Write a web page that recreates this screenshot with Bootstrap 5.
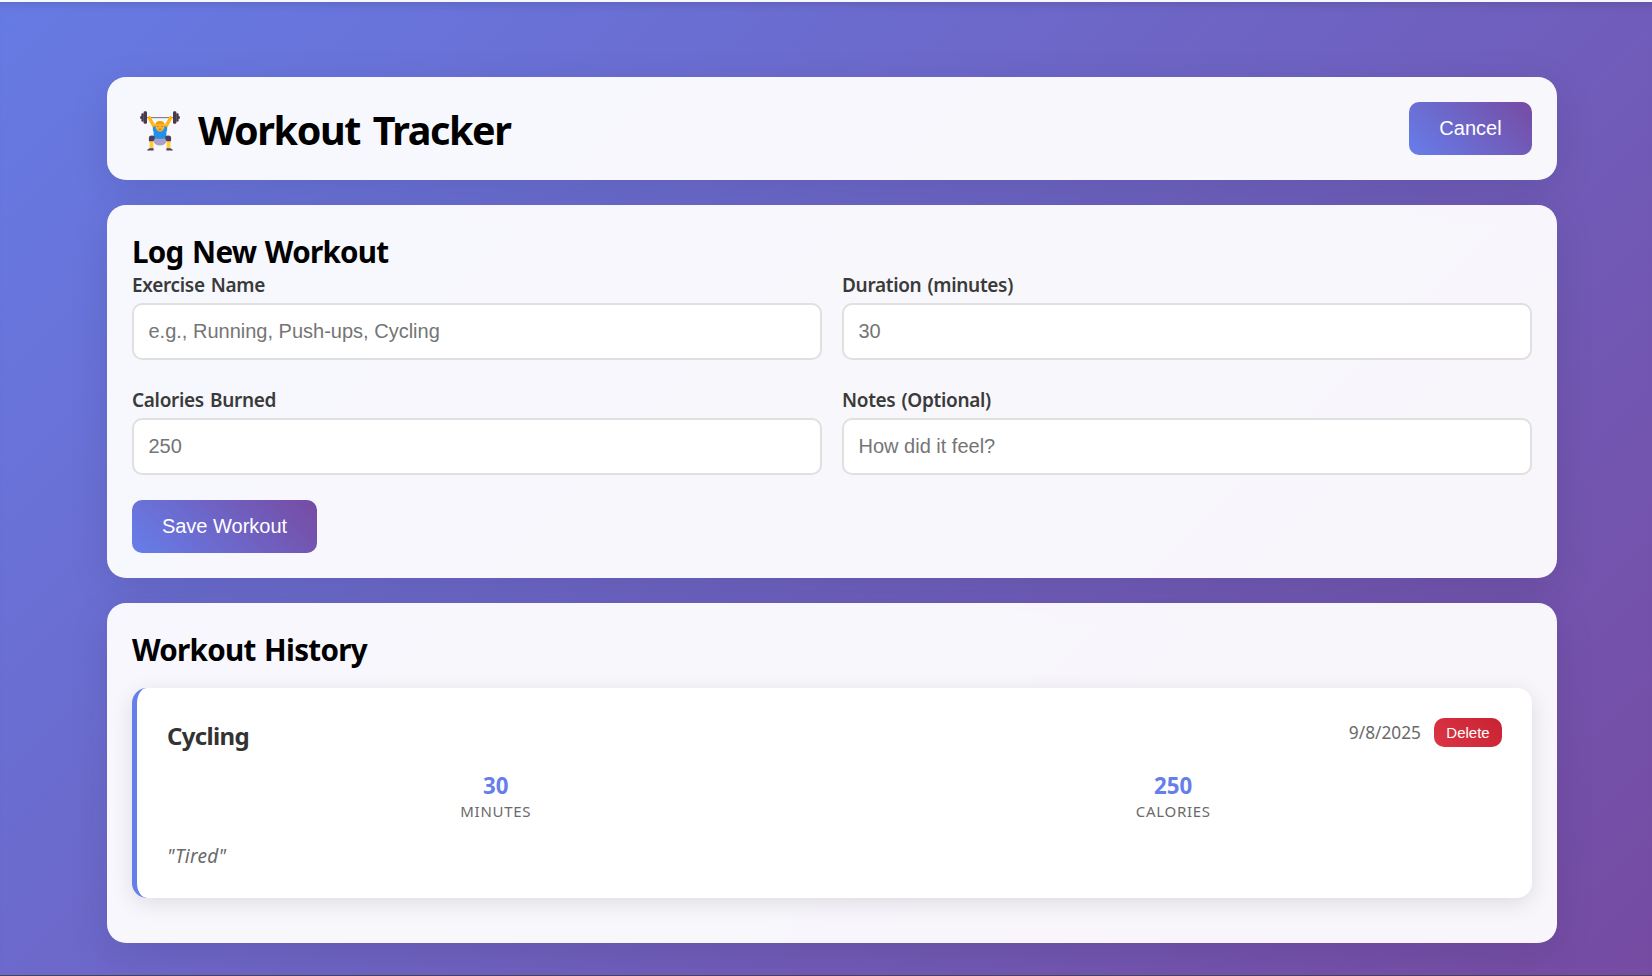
<!DOCTYPE html>
<html lang="en">
<head>
<meta charset="utf-8">
<meta name="viewport" content="width=device-width, initial-scale=1">
<title>Workout Tracker</title>
<link href="https://cdn.jsdelivr.net/npm/bootstrap@5.3.0/dist/css/bootstrap.min.css" rel="stylesheet">
<style>
body { font-family: "Noto Sans", "Open Sans", sans-serif; color: #000; height: 976px; overflow: hidden; background: #667eea; }
.page { background: linear-gradient(135deg, #667be4 0%, #764ba2 100%); min-height: 0; padding: 75px 95px 0 107px; box-shadow: inset 0 9px 10px -7px rgba(0,0,0,.13); }
.topline { height: 2px; background: #f7f8fd; }
.bottomline { height: 1px; background: #454552; }
.panel { background: rgba(255,255,255,.95); border: 0; border-radius: 19px; padding: 25px; box-shadow: 0 10px 40px rgba(0,0,0,.1); }
.panel + .panel { margin-top: 25px; }
.panel-head { height: 103px; }
h1 { font-size: 39.5px; font-weight: 700; line-height: 57px; letter-spacing: -1.4px; word-spacing: 4px; }
h2 { font-size: 29.6px; font-weight: 700; line-height: 43px; height: 41px; letter-spacing: -.72px; word-spacing: 1.5px; }
.lifter { width: 40px; height: 41px; margin: 9px 18px 0 8px; }
.btn-grad, .btn-grad:hover { background: linear-gradient(45deg, #667eea, #764ba2); color: #fff; border: 0; border-radius: 10px; font: 20px/23px "Liberation Sans", sans-serif; height: 53px; padding: 0; }
.btn-cancel { width: 123px; }
.btn-save { width: 185px; margin-top: 25px; }
.form-grid { display: grid; grid-template-columns: 1fr 1fr; gap: 26px 20px; }
.form-label { display: block; font-size: 19px; font-weight: 600; line-height: 29px; height: 27px; letter-spacing: -.32px; word-spacing: 1.5px; color: #3a3a3a; margin-bottom: 5px; }
.form-control { height: 57px; border: 2px solid #e0e0e0; border-radius: 10px; padding: 0 14.5px; font: 20px/23px "Liberation Sans", sans-serif; }
.form-control::placeholder { color: #757575; }
.entry { background: #fff; border-left: 5px solid #667eea; border-radius: 15px; padding: 30px; height: 210px; margin: 19px 0 20px; box-shadow: 0 5px 22px rgba(0,0,0,.11); }
h3 { font-size: 24px; font-weight: 700; line-height: 35px; height: 33px; letter-spacing: -.65px; color: #333; }
.date { font-size: 17.3px; line-height: 29px; color: #6a6a6a; }
.btn-del, .btn-del:hover { background: linear-gradient(45deg, #dc3545, #c82333); color: #fff; border: 0; border-radius: 10px; font: 15px/17px "Liberation Sans", sans-serif; height: 29px; padding: 0 12px; width: 68px; }
.stats { display: grid; grid-template-columns: 1fr 1fr; gap: 20px; margin: 20px 0; }
.num { font-size: 22.3px; font-weight: 700; line-height: 30px; color: #667eea; }
.unit { font-size: 15px; line-height: 21px; letter-spacing: .7px; color: #6a6a6a; text-transform: uppercase; }
.remark { font-size: 19px; line-height: 28px; letter-spacing: .25px; color: #6a6a6a; }
</style>
</head>
<body class="d-flex flex-column">
<div class="topline flex-shrink-0"></div>
<main class="page flex-grow-1">
  <header class="panel panel-head d-flex justify-content-between align-items-start">
    <div class="d-flex align-items-start">
      <svg class="lifter" viewBox="0 0 40 41" aria-hidden="true">
        <path d="M5 6.6H35" stroke="#888087" stroke-width="1.2"/>
        <path d="M9.3 6.8L15.6 18.4M30.7 6.8L24.4 18.4" stroke="#fbb816" stroke-width="3.4" stroke-linecap="round"/>
        <g fill="#47384f"><rect x="0.2" y="5.2" width="2" height="2.6"/><rect x="1.4" y="2.2" width="2.4" height="8.6" rx="1"/><rect x="3.6" y=".2" width="3.4" height="12.6" rx="1.2"/><rect x="37.8" y="5.2" width="2" height="2.6"/><rect x="36.2" y="2.2" width="2.4" height="8.6" rx="1"/><rect x="33" y=".2" width="3.4" height="12.6" rx="1.2"/></g>
        <path d="M11.4 29V38M28.6 29V38" stroke="#ffce35" stroke-width="3.8"/>
        <path d="M13.5 15.5Q20 13.8 26.5 15.5Q28 17 26.4 21V29H13.6V21Q12 17 13.5 15.5Z" fill="#2590e8"/>
        <path d="M13.8 27.8H26.2V31Q25 34.4 20 34.4Q15 34.4 13.8 31Z" fill="#a9a0c8"/>
        <path d="M9.5 25Q12 24 14.6 25.2V28.3L13.4 30.2H9Q8.4 26.5 9.5 25ZM30.5 25Q28 24 25.4 25.2V28.3L26.6 30.2H31Q31.6 26.5 30.5 25Z" fill="#4d3c5b"/>
        <path d="M7 39.6Q7.5 37.4 10 37.2H13.6V39.6ZM33 39.6Q32.5 37.4 30 37.2H26.4V39.6Z" fill="#543e67"/>
        <ellipse cx="20" cy="15.3" rx="4.5" ry="5.2" fill="#ffb52b"/>
        <path d="M15.3 15.5Q14.8 10 20 10Q25.2 10 24.7 15.5L23.2 12.9L17 13.2Z" fill="#efa10d"/>
        <path d="M18 15.1V16M22 15.1V16" stroke="#754321" stroke-width=".9"/>
        <path d="M18.6 18.2Q20 18.7 21.4 18.2" stroke="#b34b20" stroke-width=".8" fill="none"/>
      </svg>
      <h1 class="m-0">Workout Tracker</h1>
    </div>
    <button class="btn btn-grad btn-cancel" type="button">Cancel</button>
  </header>

  <section class="panel">
    <h2 class="m-0">Log New Workout</h2>
    <form>
      <div class="form-grid">
        <div><label class="form-label" for="name">Exercise Name</label><input class="form-control" id="name" placeholder="e.g., Running, Push-ups, Cycling"></div>
        <div><label class="form-label" for="duration">Duration (minutes)</label><input class="form-control" id="duration" placeholder="30"></div>
        <div><label class="form-label" for="calories">Calories Burned</label><input class="form-control" id="calories" placeholder="250"></div>
        <div><label class="form-label" for="notes">Notes (Optional)</label><input class="form-control" id="notes" placeholder="How did it feel?"></div>
      </div>
      <button class="btn btn-grad btn-save d-block text-nowrap" type="button">Save Workout</button>
    </form>
  </section>

  <section class="panel">
    <h2 class="m-0">Workout History</h2>
    <article class="entry">
      <div class="d-flex justify-content-between align-items-start">
        <h3 class="m-0">Cycling</h3>
        <div class="d-flex align-items-center" style="gap:13px">
          <span class="date">9/8/2025</span>
          <button class="btn btn-del" type="button">Delete</button>
        </div>
      </div>
      <div class="stats text-center">
        <div><div class="num">30</div><div class="unit">Minutes</div></div>
        <div><div class="num">250</div><div class="unit">Calories</div></div>
      </div>
      <div class="remark fst-italic">"Tired"</div>
    </article>
  </section>
</main>
<div class="bottomline flex-shrink-0"></div>
<script src="https://cdn.jsdelivr.net/npm/bootstrap@5.3.0/dist/js/bootstrap.bundle.min.js"></script>
</body>
</html>
